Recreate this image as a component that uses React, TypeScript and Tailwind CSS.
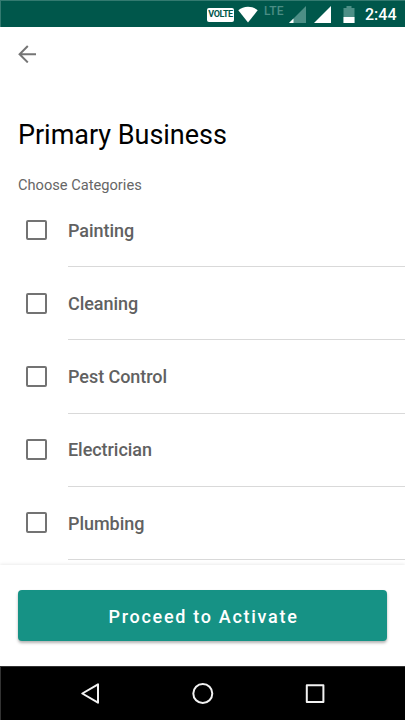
import { useState } from 'react';

const CATEGORIES = ['Painting', 'Cleaning', 'Pest Control', 'Electrician', 'Plumbing'];

function StatusBar() {
  return (
    <div className="h-[27px] flex-shrink-0 bg-[#00574b] border-t border-l border-[#337a70] flex items-center text-white">
      <div className="ml-[206px] mt-px w-[27px] h-[14px] flex-shrink-0 rounded-[2px] bg-white text-[#00574b] text-[9px] leading-none font-bold tracking-[-0.4px] flex items-center justify-center">
        VOLTE
      </div>
      <svg className="ml-[4px] w-[20px] h-[17px] flex-shrink-0" viewBox="0 0 20 17">
        <path d="M10 16.5 0.3 4.3C3 2 6.3 0.8 10 0.8s7 1.2 9.7 3.5z" fill="currentColor" />
      </svg>
      <span className="ml-[6px] w-[22px] -mt-[7px] text-[12px] leading-none font-medium tracking-[0.2px] text-[#4b8d84]">LTE</span>
      <svg className="ml-[3px] w-[17px] h-[17px] flex-shrink-0" viewBox="0 0 17 17">
        <path d="M17 0v17H0z" fill="#4d8f86" />
        <path d="M4.5 12.5V17H0z" fill="currentColor" />
      </svg>
      <svg className="ml-[8px] w-[17px] h-[17px] flex-shrink-0" viewBox="0 0 17 17">
        <path d="M17 0v17H0z" fill="currentColor" />
      </svg>
      <svg className="ml-[12px] w-[12px] h-[17px] flex-shrink-0" viewBox="0 0 12 17">
        <path d="M3.5 0h5v2H11.5v15H0.5V2h3z" fill="#4d8f86" />
        <path d="M0.5 11h11v6H0.5z" fill="currentColor" />
      </svg>
      <span className="ml-[10px] mt-px text-[16px] leading-none font-medium">2:44</span>
    </div>
  );
}

interface CategoryRowProps {
  label: string;
  checked: boolean;
  onToggle: () => void;
}

function CategoryRow({ label, checked, onToggle }: CategoryRowProps) {
  return (
    <button
      type="button"
      role="checkbox"
      aria-checked={checked}
      onClick={onToggle}
      className="w-full h-[73.125px] flex-shrink-0 flex pl-[26px] text-left"
    >
      <span
        className={`mt-[25.8px] w-[20.5px] h-[20.5px] flex-shrink-0 rounded-[2px] border-2 border-[#737373] ${
          checked ? 'bg-[#169285]' : 'bg-transparent'
        }`}
      />
      <span className="ml-[21.5px] pt-[1.6px] h-full flex-1 flex items-center border-b border-[#d9d9d9] text-[18px] leading-none font-medium tracking-[-0.05px] text-[#616161]">
        {label}
      </span>
    </button>
  );
}

function NavigationBar() {
  return (
    <div className="h-[54px] flex-shrink-0 bg-black border-t border-l border-[#333333] flex items-center text-[#f2f2f2]">
      <svg className="ml-[79px] w-[22px] h-[22px]" viewBox="0 0 22 22" fill="none" stroke="currentColor" strokeWidth="2" strokeLinejoin="round">
        <path d="M18 1.3v18.4L2.3 10.5z" />
      </svg>
      <svg className="ml-[90px] w-[22px] h-[22px]" viewBox="0 0 22 22" fill="none" stroke="currentColor" strokeWidth="2">
        <circle cx="10.8" cy="10.5" r="9.5" />
      </svg>
      <svg className="ml-[90px] w-[22px] h-[22px]" viewBox="0 0 22 22" fill="none" stroke="currentColor" strokeWidth="2" strokeLinejoin="round">
        <path d="M2.8 2.3h16.6v16.6H2.8z" />
      </svg>
    </div>
  );
}

export default function App() {
  const [selected, setSelected] = useState<string[]>([]);

  const toggleCategory = (name: string) => {
    setSelected((prev) => (prev.includes(name) ? prev.filter((item) => item !== name) : [...prev, name]));
  };

  return (
    <div className="w-[405px] h-[720px] overflow-hidden flex flex-col bg-white font-[Roboto,sans-serif]">
      <StatusBar />

      <div className="flex-1 min-h-0 overflow-hidden flex flex-col">
        {/* Header */}
        <button type="button" aria-label="Back" className="ml-[18px] mt-[18px] w-[18px] h-[18px] flex-shrink-0 text-[#757575]">
          <svg className="w-full h-full" viewBox="0 0 18 18" fill="none" stroke="currentColor" strokeWidth="2">
            <path d="M18 9.2H2M9.8 1 1.6 9.2l8.2 8.2" />
          </svg>
        </button>
        <h1 className="ml-[18px] mt-[56px] h-[32px] flex-shrink-0 text-[27px] leading-[32px] tracking-[-0.03px] text-black">Primary Business</h1>
        <p className="ml-[18px] mt-[25px] h-[18px] flex-shrink-0 text-[14.65px] leading-[18px] text-[#666666]">Choose Categories</p>

        {/* Category list */}
        <div className="mt-[0.2px] flex flex-col">
          {CATEGORIES.map((name) => (
            <CategoryRow
              key={name}
              label={name}
              checked={selected.includes(name)}
              onToggle={() => toggleCategory(name)}
            />
          ))}
        </div>
      </div>

      {/* Footer action */}
      <div className="relative h-[101px] flex-shrink-0 bg-white px-[18px] pt-[25px] shadow-[0_-1px_3px_rgba(0,0,0,0.08)]">
        <button
          type="button"
          className="w-full h-[51px] pt-[2px] pl-[2px] rounded-[4px] bg-[#169285] text-white text-[18px] leading-none font-medium tracking-[1.7px] shadow-[0_2px_3px_rgba(0,0,0,0.3)]"
        >
          Proceed to Activate
        </button>
      </div>

      <NavigationBar />
    </div>
  );
}
